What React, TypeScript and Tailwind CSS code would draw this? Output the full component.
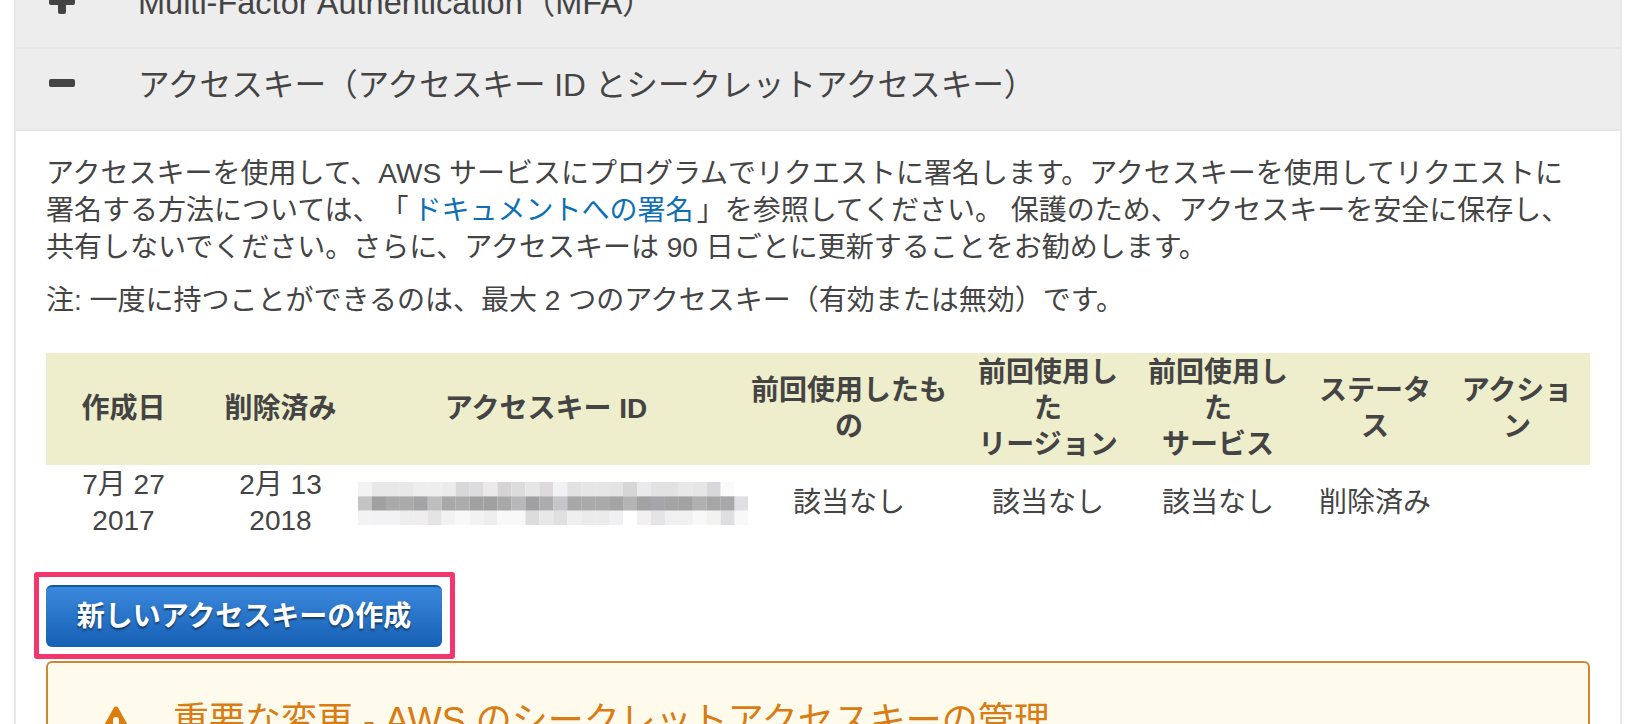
const FONT = "font-['Liberation_Sans','Noto_Sans_CJK_JP',sans-serif]";

// pixelated access key: three rows of grey blocks
const BLUR_ROWS = [
  ["f3f3f3","e8e8e8","e8e8e8","e8e8e8","eeeeee","eeeeee","ebebeb","d8d8d8","dcdcdf","ebe9e9","d6d4d4","dcdcdc","e6e6e6","dcdadb","f2f2f4","e2e2e2","e6e6e6","e6e6e6","e4e4e4","d6d6d6","eaeaec","e2e2e2","e2e2e2","e8e8e8","e6e6e6","d8d8dc","fafafa","ffffff"],
  ["c4c4c4","a0a0a0","aaaaaa","aaaaaa","a4a4a6","bebebe","a8a8a8","acacac","a0a0a0","a0a0a0","a8a8a8","b8b8ba","a0a0a2","acacb0","c6c6c8","a8a8a8","aaaaaa","aaaaaa","a4a4a4","b4b4b4","a2a2a2","a6a6a8","a4a4a4","a2a2a2","b0b0b0","a6a6a6","a8a8aa","e0e0e4"],
  ["f3f3f3","f2f2f4","f2f2f4","eeeeee","efeded","e4e4e4","f2f2f2","f8f8f8","f2f2f2","eeeeee","f8f8f8","f8f8f8","dcdcdc","e8e8e8","e0e0e0","efefef","ebebeb","ebebeb","f0f0f2","ffffff","f2f0f0","e4e4e6","f0f0f0","f0f0f0","f8f8f8","f2f2f0","dedee0","f8f8f8"],
];

function BlurredKey() {
  return (
    <svg width="390" height="43" viewBox="0 0 390 43" className="block -ml-[2px]">
      {BLUR_ROWS.map((row, y) =>
        row.map((c, x) => (
          <rect key={`${x}-${y}`} x={x * 13.95} y={y * 14.34} width="14" height="14.4" fill={`#${c}`} />
        ))
      )}
    </svg>
  );
}

function PlusMinus({ plus }: { plus?: boolean }) {
  return (
    <svg width="28" height="28" viewBox="0 0 28 28" className="block">
      <rect x="1" y="10" width="26" height="8" rx="2" fill="#444" />
      {plus && <rect x="10" y="1" width="8" height="26" rx="2" fill="#444" />}
    </svg>
  );
}

const thClass = "px-0 py-0 font-bold text-center align-middle";
const tdClass = "px-0 py-0.5 text-center align-middle font-normal";
const rowClass = "flex items-center bg-[#ededed] border-b-2 border-[#e6e6e6] text-[31.6px] pb-[8px]";

export default function App() {
  return (
    <div className={`${FONT} [text-spacing-trim:space-all] h-[724px] overflow-hidden bg-white text-[28px] leading-[36px] text-[#444]`}>
      <div className="ml-[14px] w-[1608px] -mt-[34px] border-x-2 border-[#e8e8e8] h-[760px]">
        <div className={`${rowClass} h-[83px]`}>
          <div className="flex w-[122px] pl-[32px] mb-[4px]">
            <PlusMinus plus />
          </div>
          <span className="text-[32.5px]">Multi-Factor Authentication（MFA）</span>
        </div>
        <div className={`${rowClass} h-[82px]`}>
          <div className="flex w-[122px] pl-[32px] mb-[4px]">
            <PlusMinus />
          </div>
          <span>アクセスキー（アクセスキー ID とシークレットアクセスキー）</span>
        </div>

        <div className="pl-[30px] pt-[24px]">
          <p className="leading-[37px]">
            アクセスキーを使用して、AWS サービスにプログラムでリクエストに署名します。アクセスキーを使用してリクエストに
            <br />
            署名する方法については、「<a className="ml-[5px] mr-[3px] text-[#0e6fb4]">ドキュメントへの署名</a>」を参照してください。 保護のため、アクセスキーを安全に保存し、
            <br />
            共有しないでください。さらに、アクセスキーは 90 日ごとに更新することをお勧めします。
          </p>
          <p className="mt-[16px] leading-[37px]">注: 一度に持つことができるのは、最大 2 つのアクセスキー（有効または無効）です。</p>

          <table className="mt-[34px] w-[1544px] table-fixed border-collapse">
            <colgroup>
              <col className="w-[155px]" />
              <col className="w-[159px]" />
              <col className="w-[372px]" />
              <col className="w-[234px]" />
              <col className="w-[164px]" />
              <col className="w-[176px]" />
              <col className="w-[138px]" />
              <col className="w-[146px]" />
            </colgroup>
            <thead>
              <tr className="h-[112px] bg-[#eeeecc]">
                <th className={thClass}>作成日</th>
                <th className={thClass}>削除済み</th>
                <th className={thClass}>アクセスキー ID</th>
                <th className={thClass}>前回使用したも<br />の</th>
                <th className={thClass}>前回使用し<br />た<br />リージョン</th>
                <th className={thClass}>前回使用し<br />た<br />サービス</th>
                <th className={thClass}>ステータ<br />ス</th>
                <th className={thClass}>アクショ<br />ン</th>
              </tr>
            </thead>
            <tbody>
              <tr>
                <td className={tdClass}>7月 27<br />2017</td>
                <td className={tdClass}>2月 13<br />2018</td>
                <td className={tdClass}><BlurredKey /></td>
                <td className={tdClass}>該当なし</td>
                <td className={tdClass}>該当なし</td>
                <td className={tdClass}>該当なし</td>
                <td className={tdClass}>削除済み</td>
                <td className={tdClass}></td>
              </tr>
            </tbody>
          </table>

          <div className="relative mt-[44px] w-[396px]">
            <button className="block h-[62px] w-[396px] rounded-[6px] border-t-2 border-[#115a9c] bg-gradient-to-b from-[#3a88dd] to-[#1560b4] text-[28px] font-bold text-white [text-shadow:0_2px_2px_rgba(0,0,0,0.5)]">
              新しいアクセスキーの作成
            </button>
            <div className="absolute -left-[12px] -top-[13px] h-[87px] w-[421px] rounded-[3px] border-[5px] border-[#f4366f]" />
          </div>

          <div className="mt-[14px] flex h-[120px] w-[1544px] items-start rounded-[6px] border-2 border-[#cc8833] bg-[#fffbec] pl-[53px] pt-[29px]">
            <svg width="44" height="40" viewBox="0 0 44 40" className="mt-[14px] -ml-[7px]">
              <path d="M22 3 L41 37 L3 37 Z" fill="#dd7d10" stroke="#dd7d10" strokeWidth="5" strokeLinejoin="round" />
              <path d="M22 14 L22 27" stroke="#fffbec" strokeWidth="6" strokeLinecap="round" />
            </svg>
            <span className="ml-[35px] mt-[7px] text-[36px] leading-[44px] text-[#d97c14]">重要な変更 - AWS のシークレットアクセスキーの管理</span>
          </div>
        </div>
      </div>
    </div>
  );
}
